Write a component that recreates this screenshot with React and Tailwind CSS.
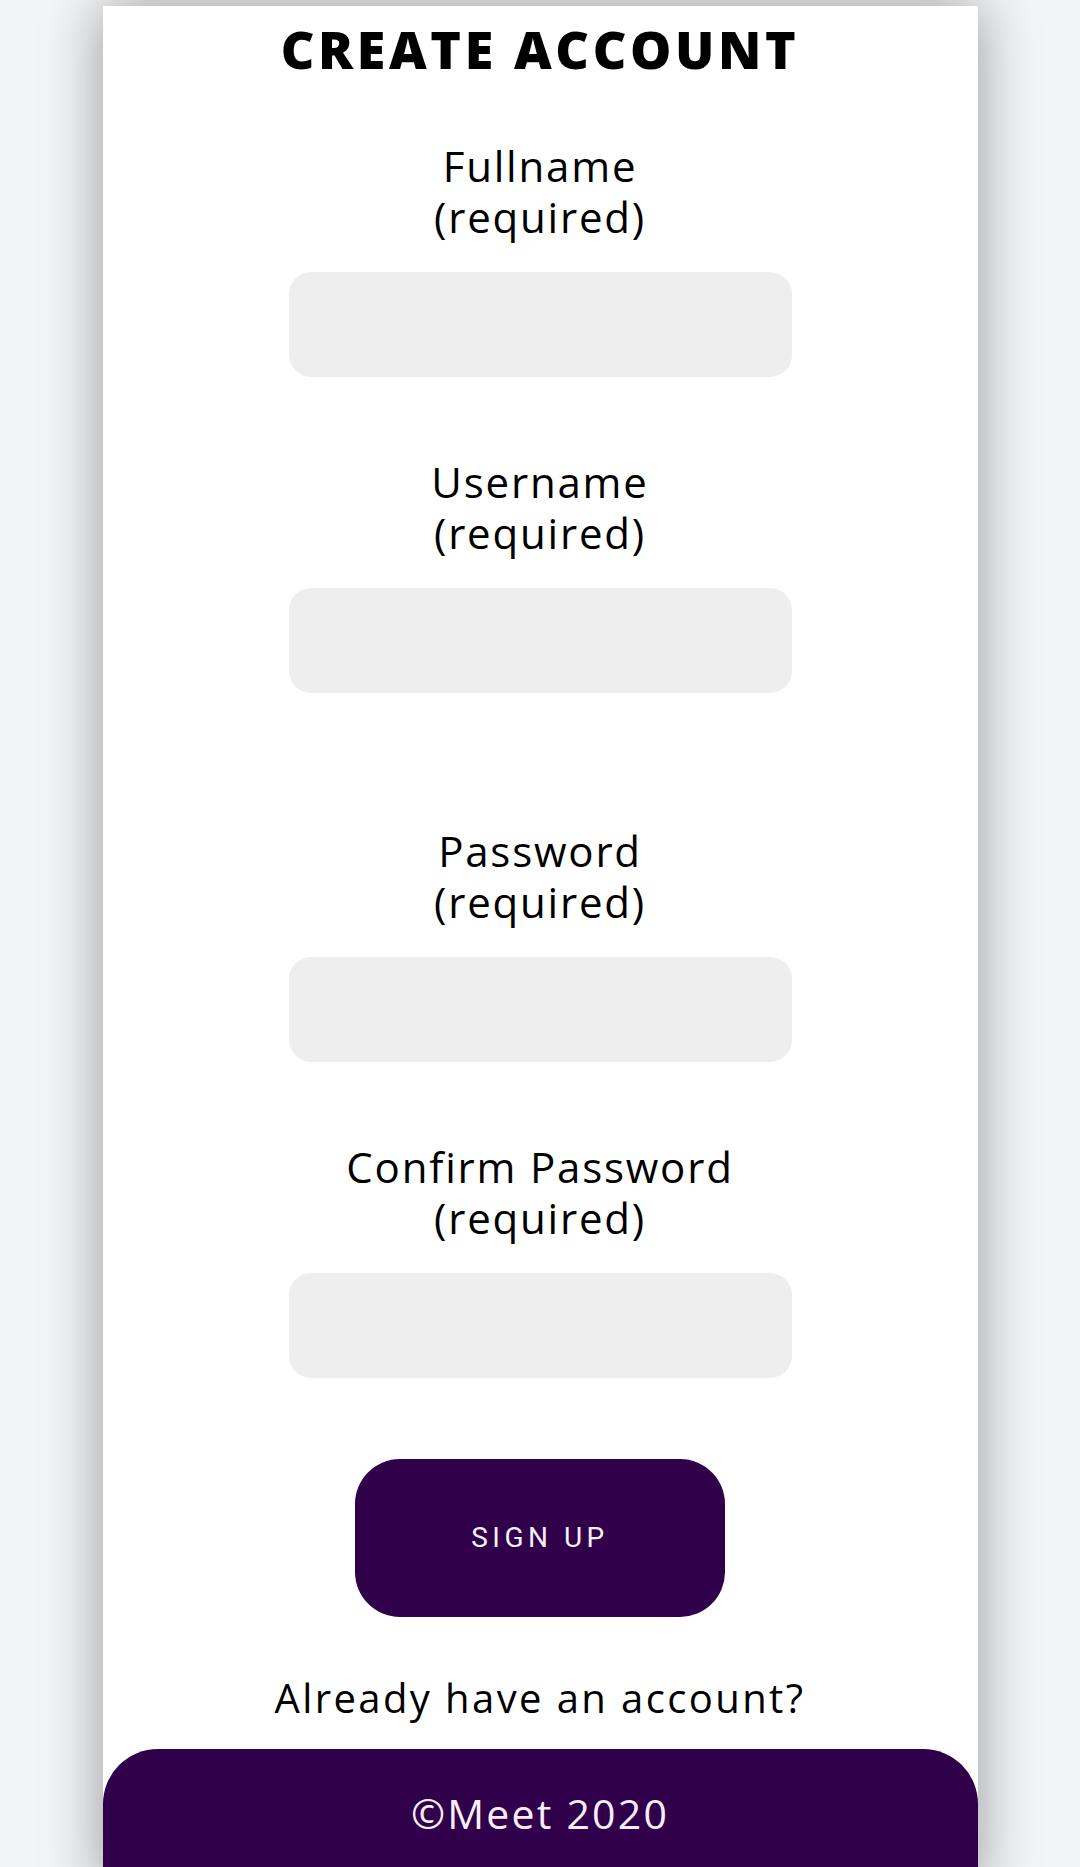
export default function App() {
  const fields = [
    { label: "Fullname", mt: "mt-[65px]" },
    { label: "Username", mt: "mt-[79px]" },
    { label: "Password", mt: "mt-[132px]" },
    { label: "Confirm Password", mt: "mt-[79px]" },
  ];
  return (
    <div className="h-[1867px] overflow-hidden bg-[#f3f4f6]">
      <div
        className="mx-auto mt-[6px] flex w-[875px] flex-col items-center bg-white shadow-[0_0_55px_rgba(0,0,0,0.38)]"
        style={{ fontFamily: '"Open Sans", "Noto Sans", sans-serif' }}
      >
        <h1 className="mt-[17px] text-[52px] leading-[52px] font-extrabold tracking-[3.6px] text-black">
          CREATE ACCOUNT
        </h1>
        {fields.map((f) => (
          <div key={f.label} className={`flex flex-col items-center ${f.mt}`}>
            <label className="flex flex-col items-center text-center text-[42px] leading-[51px] font-normal tracking-[1.8px] text-black">
              <span>{f.label}</span>
              <span>(required)</span>
            </label>
            <input
              type={f.label.includes("Password") ? "password" : "text"}
              className="mt-[30px] h-[105px] w-[503px] rounded-[22px] bg-[#eeeeee] outline-none"
            />
          </div>
        ))}
        <button
          className="mt-[81px] flex h-[158px] w-[370px] items-center justify-center rounded-[45px] bg-[#30004a] text-[28px] font-normal tracking-[4.5px] text-[#f6f0f8]"
          style={{ fontFamily: 'Roboto, "Noto Sans", sans-serif' }}
        >
          SIGN UP
        </button>
        <p className="mt-[58px] text-[40px] leading-[46px] tracking-[2.4px] text-black">
          Already have an account?
        </p>
        <footer className="mt-[28px] h-[140px] w-full rounded-t-[55px] bg-[#30004a] pt-[40px] text-center">
          <span className="text-[41px] leading-[48px] tracking-[2.2px] text-[#f6eef8]">©Meet 2020</span>
        </footer>
      </div>
    </div>
  );
}
